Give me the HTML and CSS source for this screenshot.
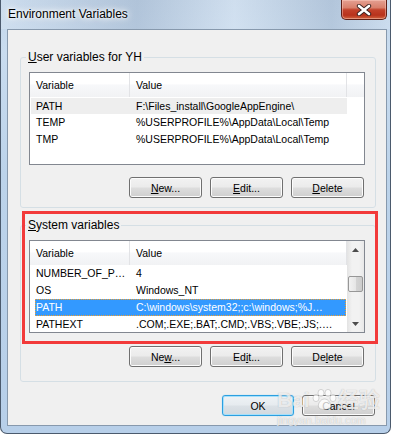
FILE: index.html
```html
<!DOCTYPE html>
<html lang="en">
<head>
    <meta charset="UTF-8">
    <title>Environment Variables</title>
    <link rel="stylesheet" href="styles.css">
</head>
<body>
    <div class="window">
        <div class="titlebar">
            <span class="title">Environment Variables</span>
            <button class="close" title="Close">
                <svg width="16" height="12" viewBox="0 0 16 12">
                    <path d="M3 2 L13 10 M13 2 L3 10" stroke="#3a2220" stroke-width="4.4" stroke-linecap="round"/>
                    <path d="M3 2 L13 10 M13 2 L3 10" stroke="#ffffff" stroke-width="2.6" stroke-linecap="round"/>
                </svg>
            </button>
        </div>
        <div class="client">
            <fieldset class="group user">
                <legend><u>U</u>ser variables for YH</legend>
                <div class="list">
                    <div class="list-main">
                        <div class="list-head">
                            <span class="col-name">Variable</span>
                            <span class="col-value">Value</span>
                        </div>
                        <div class="row inactive"><span class="col-name">PATH</span><span class="col-value">F:\Files_install\GoogleAppEngine\</span></div>
                        <div class="row"><span class="col-name">TEMP</span><span class="col-value">%USERPROFILE%\AppData\Local\Temp</span></div>
                        <div class="row"><span class="col-name">TMP</span><span class="col-value">%USERPROFILE%\AppData\Local\Temp</span></div>
                    </div>
                    <div class="head-fill"></div>
                </div>
                <div class="actions">
                    <button class="btn"><u>N</u>ew...</button>
                    <button class="btn"><u>E</u>dit...</button>
                    <button class="btn"><u>D</u>elete</button>
                </div>
            </fieldset>

            <fieldset class="group system">
                <legend><u>S</u>ystem variables</legend>
                <div class="list">
                    <div class="list-main">
                        <div class="list-head">
                            <span class="col-name">Variable</span>
                            <span class="col-value">Value</span>
                        </div>
                        <div class="row"><span class="col-name">NUMBER_OF_P…</span><span class="col-value">4</span></div>
                        <div class="row"><span class="col-name">OS</span><span class="col-value">Windows_NT</span></div>
                        <div class="row selected"><span class="col-name">PATH</span><span class="col-value">C:\windows\system32;;c:\windows;%J…</span></div>
                        <div class="row"><span class="col-name">PATHEXT</span><span class="col-value">.COM;.EXE;.BAT;.CMD;.VBS;.VBE;.JS;.…</span></div>
                    </div>
                    <div class="scrollbar">
                        <div class="sb-arrow"><svg width="7" height="4" viewBox="0 0 7 4"><path d="M0 4 L3.5 0 L7 4 Z" fill="#4d4d4d"/></svg></div>
                        <div class="sb-track"><div class="sb-thumb"></div></div>
                        <div class="sb-arrow"><svg width="7" height="4" viewBox="0 0 7 4"><path d="M0 0 L7 0 L3.5 4 Z" fill="#4d4d4d"/></svg></div>
                    </div>
                </div>
                <div class="actions">
                    <button class="btn">Ne<u>w</u>...</button>
                    <button class="btn">Ed<u>i</u>t...</button>
                    <button class="btn">De<u>l</u>ete</button>
                </div>
            </fieldset>

            <div class="dialog-actions">
                <button class="btn default">OK</button>
                <button class="btn">Cancel</button>
            </div>

            <div class="mark-box"></div>
        </div>

        <div class="watermark">
            <span class="wm-brand">Bai<svg width="26" height="22" viewBox="0 0 26 22"><g fill="rgba(255,255,255,0.75)" stroke="rgba(120,120,120,0.35)" stroke-width="0.8"><ellipse cx="5" cy="9" rx="3" ry="3.6"/><ellipse cx="10" cy="4" rx="3" ry="3.6"/><ellipse cx="17" cy="4" rx="3" ry="3.6"/><ellipse cx="22" cy="9" rx="3" ry="3.6"/><path d="M13.5 10 C9 10 6 16 8 19 C10 21 17 21 19 19 C21 16 18 10 13.5 10 Z"/></g></svg>经验</span>
            <span class="wm-url">jingyan.baidu.com</span>
        </div>
    </div>
</body>
</html>
```

FILE: styles.css
```css
body {
    margin: 0;
    background: #ffffff;
    font-family: "Segoe UI", "Liberation Sans", Arial, sans-serif;
    font-size: 12px;
    color: #000;
}

.window {
    position: relative;
    width: 391px;
    height: 434px;
    box-sizing: border-box;
    border: 1px solid #4b5a6d;
    border-top: 0;
    border-radius: 0 0 7px 7px;
    background: linear-gradient(180deg, #c3d6ea 0%, #c9dcef 12%, #bcd3ea 40%, #b7cfe9 100%);
    display: flex;
    flex-direction: column;
    overflow: hidden;
}

.titlebar {
    height: 29px;
    display: flex;
    align-items: flex-start;
    padding-left: 7px;
    background: linear-gradient(90deg, rgba(255,255,255,0.15), rgba(90,110,140,0.18) 35%, rgba(255,255,255,0.2) 60%, rgba(80,100,130,0.15) 85%, rgba(255,255,255,0.1));
}
.title {
    line-height: 29px;
    text-shadow: 0 0 6px #fff, 0 0 10px #fff, 0 0 3px #fff;
}
.close {
    margin: 0 3px 0 auto;
    width: 46px;
    height: 20px;
    padding: 0;
    border: 1px solid #5e1f17;
    border-top: 0;
    border-radius: 0 0 5px 5px;
    background: linear-gradient(180deg, #e4a092 0%, #d9806c 40%, #c2412a 52%, #b8321c 80%, #d0643f 100%);
    box-shadow: inset 0 0 0 1px rgba(255,210,200,0.45);
    display: flex;
    align-items: center;
    justify-content: center;
}

.client {
    position: relative;
    margin: 0 3px 0 6px;
    height: 397px;
    box-sizing: border-box;
    border: 1px solid #8799ad;
    background: #f0f0f0;
    display: flex;
    flex-direction: column;
}

.group {
    margin: 19px 10px 0 12px;
    padding: 7px 10px 9px 8px;
    border: 1px solid #d5dfe5;
    border-radius: 3px;
    min-width: 0;
}
.group.system {
    margin-top: 9px;
    padding-bottom: 14px;
}
.group legend {
    padding: 0 2px;
    margin-left: -3px;
    line-height: 16px;
}

.list {
    height: 93px;
    box-sizing: border-box;
    border: 1px solid #828790;
    background: #fff;
    display: flex;
    overflow: hidden;
    font-size: 10.5px;
}
.list-main {
    width: 317px;
    flex-shrink: 0;
}
.list-head {
    display: flex;
    height: 24px;
    background: linear-gradient(180deg, #ffffff 0%, #ffffff 45%, #f7f8fa 50%, #f1f2f4 100%);
}
.list-head span {
    line-height: 24px;
    padding-left: 6px;
    box-sizing: border-box;
    border-right: 1px solid #e2e3e6;
}
.list-head .col-name { width: 100px; }
.list-head .col-value { width: 217px; }
.head-fill {
    flex: 1;
    height: 24px;
    background: linear-gradient(180deg, #ffffff 0%, #ffffff 45%, #f7f8fa 50%, #f1f2f4 100%);
}

.row {
    display: flex;
    height: 17px;
    line-height: 17px;
    margin-left: 1px;
    width: 316px;
    white-space: nowrap;
}
.row .col-name {
    flex-shrink: 0;
    width: 99px;
    padding-left: 5px;
    box-sizing: border-box;
    overflow: hidden;
}
.row .col-value {
    flex: 1;
    min-width: 0;
    padding-left: 6px;
    overflow: hidden;
}
.row.inactive {
    height: 16px;
    margin-top: 1px;
    background: #eeeeee;
}
.row.selected {
    margin-left: 5px;
    width: 311px;
    box-sizing: border-box;
    background: #3399ff;
    color: #fff;
    outline: 1px dotted #f0a030;
    outline-offset: -1px;
}
.row.selected .col-name { width: 95px; padding-left: 1px; }

.scrollbar {
    width: 17px;
    display: flex;
    flex-direction: column;
    background: linear-gradient(90deg, #e3e3e3, #f2f2f2 30%, #f2f2f2 70%, #e8e8e8);
}
.sb-arrow {
    height: 17px;
    display: flex;
    align-items: center;
    justify-content: center;
}
.sb-track {
    flex: 1;
    padding-top: 18px;
}
.sb-thumb {
    margin: 0 1px;
    height: 16px;
    box-sizing: border-box;
    border: 1px solid #979797;
    border-radius: 2px;
    background: linear-gradient(90deg, #f2f2f2, #e6e6e6 50%, #d4d4d4 51%, #cccccc);
}

.actions {
    display: flex;
    justify-content: flex-end;
    gap: 8px;
    margin-top: 12px;
    padding-right: 1px;
}
.system .actions { margin-top: 13px; }

.btn {
    width: 73px;
    height: 21px;
    padding: 0;
    border: 1px solid #707070;
    border-radius: 3px;
    background: linear-gradient(180deg, #f2f2f2 0%, #ebebeb 48%, #dddddd 52%, #cfcfcf 100%);
    box-shadow: inset 0 0 0 1px #fcfcfc;
    font-family: inherit;
    font-size: 10.5px;
    color: #000;
}
.btn.default {
    width: 72px;
    border-color: #2c9fe0;
    background: linear-gradient(180deg, #eef2f5 0%, #e6ebef 48%, #dbe1e6 52%, #d2d9df 100%);
    box-shadow: inset 0 0 0 1px #a6e0fb, 0 0 1px #6cc6f4;
}

.dialog-actions {
    display: flex;
    justify-content: flex-end;
    gap: 8px;
    margin-top: 13px;
    padding-right: 11px;
}

.mark-box {
    position: absolute;
    left: 14px;
    top: 181px;
    width: 356px;
    height: 133px;
    box-sizing: border-box;
    border: 3px solid #f23a3a;
    pointer-events: none;
}

.watermark {
    position: absolute;
    left: 276px;
    top: 388px;
    display: flex;
    flex-direction: column;
    align-items: flex-start;
    pointer-events: none;
    color: rgba(255,255,255,0.75);
    text-shadow: 0 0 1px rgba(90,90,90,0.45);
}
.wm-brand {
    display: flex;
    align-items: center;
    font-family: "Liberation Sans", "Noto Sans CJK SC", sans-serif;
    font-size: 21px;
    font-weight: bold;
    line-height: 24px;
}
.wm-brand svg { margin: 0 1px; }
.wm-url {
    font-family: "Liberation Sans", sans-serif;
    font-size: 11px;
    line-height: 12px;
    margin-top: 2px;
}
```
